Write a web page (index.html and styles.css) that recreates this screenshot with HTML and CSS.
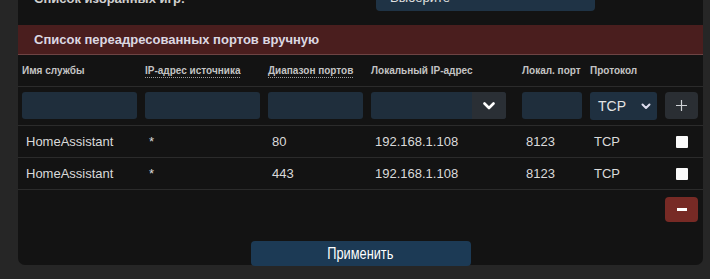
FILE: index.html
```html
<!DOCTYPE html>
<html lang="ru">
<head>
<meta charset="utf-8">
<link rel="stylesheet" href="styles.css">
</head>
<body>
<div class="page">
  <div class="panel">
    <div class="games-row">
      <div class="games-label">Список избранных игр:</div>
      <div class="games-select">Выберите
        <svg class="games-chev" width="8" height="6" viewBox="0 0 8 6"><path d="M1 1l3 3 3-3" fill="none" stroke="#ddd" stroke-width="1.6"/></svg>
      </div>
    </div>
    <div class="title-bar">Список переадресованных портов вручную</div>
    <div class="grid head">
      <div class="hcell">Имя службы</div>
      <div class="hcell"><span class="dotted">IP-адрес источника</span></div>
      <div class="hcell"><span class="dotted">Диапазон портов</span></div>
      <div class="hcell">Локальный IP-адрес</div>
      <div class="hcell">Локал. порт</div>
      <div class="hcell">Протокол</div>
      <div class="hcell"></div>
    </div>
    <div class="grid inputs">
      <div class="field w115"></div>
      <div class="field w115"></div>
      <div class="field w95"></div>
      <div class="field combo">
        <div class="combo-input"></div>
        <div class="combo-btn"><svg width="12" height="8" viewBox="0 0 12 8"><path d="M1.5 1.5l4.5 4.5 4.5-4.5" fill="none" stroke="#fff" stroke-width="2.6" stroke-linecap="round" stroke-linejoin="round"/></svg></div>
      </div>
      <div class="field w60"></div>
      <div class="proto">TCP <svg width="10" height="7" viewBox="0 0 10 7"><path d="M1.5 1.5l3.5 3.5 3.5-3.5" fill="none" stroke="#dde" stroke-width="2" stroke-linecap="round" stroke-linejoin="round"/></svg></div>
      <div class="plus"><svg width="13" height="13" viewBox="0 0 13 13"><path d="M6.5 1v11M1 6.5h11" stroke="#cfd2d6" stroke-width="1.2"/></svg></div>
    </div>
    <div class="grid row">
      <div class="cell">HomeAssistant</div>
      <div class="cell">*</div>
      <div class="cell">80</div>
      <div class="cell">192.168.1.108</div>
      <div class="cell">8123</div>
      <div class="cell">TCP</div>
      <div class="cell check-cell"><span class="check"></span></div>
    </div>
    <div class="grid row">
      <div class="cell">HomeAssistant</div>
      <div class="cell">*</div>
      <div class="cell">443</div>
      <div class="cell">192.168.1.108</div>
      <div class="cell">8123</div>
      <div class="cell">TCP</div>
      <div class="cell check-cell"><span class="check"></span></div>
    </div>
    <div class="minus-row"><div class="minus"><span class="dash"></span></div></div>
    <div class="apply-row"><div class="apply"><span class="apply-text">Применить</span></div></div>
  </div>
</div>
</body>
</html>
```
FILE: styles.css
```css
html, body { margin: 0; padding: 0; }
body {
  background: #262626;
  font-family: "Liberation Sans", Arial, sans-serif;
  color: #d8d8d8;
  height: 279px;
  overflow: hidden;
}
.page { padding: 0 7px 0 18px; }
.panel {
  background: #131313;
  border-radius: 0 0 7px 7px;
  height: 279px;
  box-sizing: border-box;
}
.games-row {
  display: flex;
  align-items: flex-end;
  height: 25px;
  margin-top: -14px;
  margin-bottom: 14px;
}
.games-label {
  width: 342px;
  padding-left: 16px;
  font-size: 13px;
  font-weight: bold;
  color: #d0d0d0;
  line-height: 16px;
  margin-bottom: 4px;
}
.games-select {
  width: 219px;
  height: 25px;
  box-sizing: border-box;
  background: #1f3345;
  border-radius: 4px;
  font-size: 13px;
  color: #e0e0e0;
  padding: 4px 0 0 14px;
  display: flex;
  justify-content: space-between;
}
.games-chev { margin: 4px 6px 0 0; }
.title-bar {
  height: 29px;
  background: #4a1e1e;
  border-bottom: 1px solid #6e4444;
  padding-left: 16px;
  font-size: 13px;
  font-weight: bold;
  color: #dcd8e2;
  line-height: 30px;
}
.grid {
  display: grid;
  grid-template-columns: 123px 123px 103px 151px 68px 75px 33px;
  padding-left: 4px;
  border-bottom: 1px solid #2b2b2b;
}
.head { height: 31px; align-items: center; }
.hcell {
  font-size: 10px;
  font-weight: bold;
  color: #c4c4c4;
  line-height: 12px;
}
.dotted { border-bottom: 1px dotted #9a9a9a; padding-bottom: 1px; }
.inputs { height: 39px; align-items: start; padding-top: 5px; box-sizing: border-box; }
.field {
  height: 27px;
  background: #1f2e3c;
  border-radius: 3px;
}
.w115 { width: 115px; }
.w95 { width: 95px; }
.w60 { width: 60px; }
.combo { width: 135px; display: flex; overflow: hidden; }
.combo-input { flex: 1; }
.combo-btn {
  width: 34px;
  background: #2a2f35;
  display: flex;
  align-items: center;
  justify-content: center;
}
.proto {
  width: 67px;
  height: 28px;
  box-sizing: border-box;
  background: #1f3040;
  border-radius: 3px;
  font-size: 14px;
  color: #e4e4e4;
  display: flex;
  align-items: center;
  justify-content: space-between;
  padding: 0 6px 0 8px;
}
.plus {
  height: 27px;
  background: #2a2e33;
  border-radius: 4px;
  display: flex;
  align-items: center;
  justify-content: center;
}
.row { height: 31px; align-items: center; }
.cell { font-size: 13px; color: #dadada; padding-left: 4px; }
.check-cell { display: flex; justify-content: center; padding-left: 0; }
.check {
  width: 12px;
  height: 12px;
  background: #fafafa;
  border-radius: 1px;
}
.minus-row {
  display: flex;
  justify-content: flex-end;
  padding: 7px 5px 0 0;
}
.minus {
  width: 33px;
  height: 25px;
  background: #772a25;
  border-radius: 4px;
  display: flex;
  align-items: center;
  justify-content: center;
}
.dash { width: 10px; height: 3px; background: #fff; }
.apply-row {
  display: flex;
  justify-content: center;
  padding-top: 19px;
}
.apply {
  width: 220px;
  height: 25px;
  background: #1c3a55;
  border-radius: 4px;
  display: flex;
  align-items: center;
  justify-content: center;
}
.apply-text {
  display: inline-block;
  font-size: 16px;
  color: #fff;
  transform: scaleX(0.8);
}
```
